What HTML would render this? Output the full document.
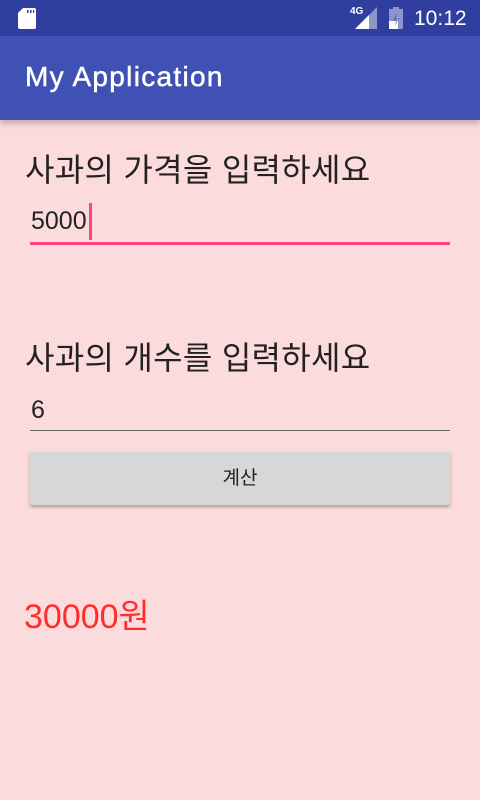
<!DOCTYPE html>
<html><head><meta charset="utf-8"><style>
*{margin:0;padding:0;box-sizing:border-box}
body{width:480px;height:800px;background:#fcdbdd;font-family:"Liberation Sans","Noto Sans CJK KR",sans-serif;position:relative;overflow:hidden}
.sb{position:absolute;top:0;left:0;width:480px;height:36px;background:#303f9f}
.ab{position:absolute;top:36px;left:0;width:480px;height:84px;background:#3f51b5;box-shadow:0 3px 6px rgba(0,0,0,.25)}
.ab span{position:absolute;left:25px;top:25px;color:#fff;font-size:28px;letter-spacing:1.3px;-webkit-text-stroke:0.5px #fff}
.t{position:absolute;color:#222;font-size:32px;left:25px;letter-spacing:0.3px}
.line{position:absolute;left:30px;width:420px}
.v{position:absolute;left:31px;font-size:25px;color:#222}
.btn{position:absolute;left:30px;top:452px;width:420px;height:53px;background:#d6d7d7;border-radius:2px;box-shadow:0 2px 3px rgba(0,0,0,.3);text-align:center;line-height:53px;font-size:19px;color:#222}
</style></head><body>
<div class="sb">
<svg style="position:absolute;left:18px;top:8px" width="18" height="21"><path d="M5 0H16a2 2 0 0 1 2 2V19a2 2 0 0 1-2 2H2a2 2 0 0 1-2-2V5z" fill="#fff"/><rect x="9" y="2" width="1.5" height="3" fill="#303f9f"/><rect x="12" y="2" width="1.5" height="3" fill="#303f9f"/><rect x="15" y="2" width="1.2" height="3" fill="#303f9f"/></svg>
<span style="position:absolute;left:350px;top:6px;color:#fff;font-size:10px;font-weight:bold">4G</span>
<svg style="position:absolute;left:355px;top:7px" width="22" height="22"><path d="M22 0V22H0z" fill="rgba(255,255,255,.45)"/><path d="M14 8V22H0z" fill="#fff"/></svg>
<svg style="position:absolute;left:389px;top:7px" width="14" height="22"><rect x="4" y="0" width="6" height="2" fill="rgba(255,255,255,.45)"/><rect x="0" y="2" width="14" height="20" fill="rgba(255,255,255,.45)"/><path d="M0 14H5L9 10V22H0z" fill="#fff"/><path d="M8 6L4 14H7L6 19L10 11H7z" fill="#303f9f" opacity=".6"/></svg>
<span style="position:absolute;left:414px;top:7px;color:#fff;font-size:21px">10:12</span>
</div>
<div class="ab"><span>My Application</span></div>
<div class="t" style="top:145px">사과의 가격을 입력하세요</div>
<div class="v" style="top:207px">5000</div>
<div style="position:absolute;left:89px;top:203px;width:3px;height:37px;background:#ff4081"></div>
<div class="line" style="top:242px;height:3px;background:#ff4081"></div>
<div class="t" style="top:333px">사과의 개수를 입력하세요</div>
<div class="v" style="top:396px">6</div>
<div class="line" style="top:430px;height:1px;background:#666"></div>
<div class="btn">계산</div>
<div style="position:absolute;left:24px;top:589px;font-size:34px;color:#ff2d2d">30000원</div>
</body></html>
